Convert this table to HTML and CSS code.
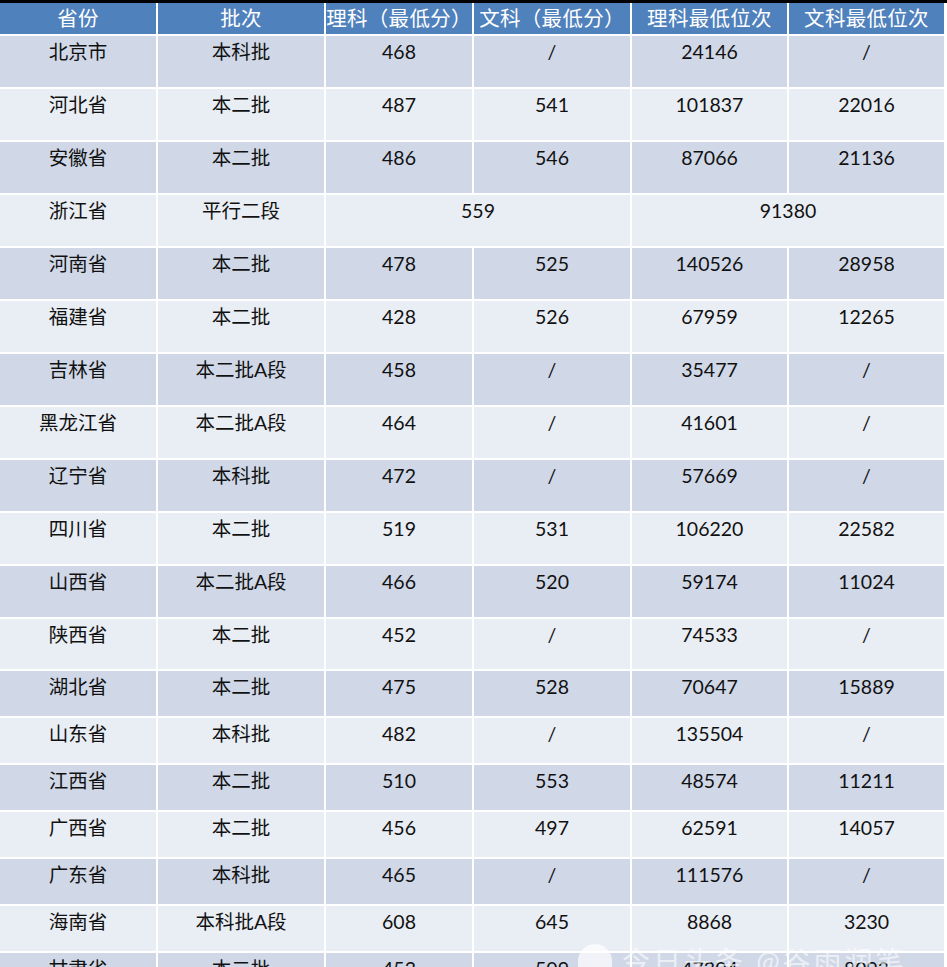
FILE: index.html
```html
<!DOCTYPE html>
<html lang="zh">
<head>
<meta charset="utf-8">
<title>各省录取最低分</title>
<link rel="stylesheet" href="styles.css">
</head>
<body>
<div class="page">
  <div class="topbar"></div>
  <table class="scores">
    <colgroup>
      <col class="c1"><col class="c2"><col class="c3"><col class="c4"><col class="c5"><col class="c6">
    </colgroup>
    <thead>
      <tr class="head">
        <th>省份</th><th>批次</th><th>理科（最低分）</th><th>文科（最低分）</th><th>理科最低位次</th><th>文科最低位次</th>
      </tr>
    </thead>
    <tbody>
      <tr class="odd tall"><td>北京市</td><td>本科批</td><td>468</td><td>/</td><td>24146</td><td>/</td></tr>
      <tr class="even tall"><td>河北省</td><td>本二批</td><td>487</td><td>541</td><td>101837</td><td>22016</td></tr>
      <tr class="odd tall"><td>安徽省</td><td>本二批</td><td>486</td><td>546</td><td>87066</td><td>21136</td></tr>
      <tr class="even tall"><td>浙江省</td><td>平行二段</td><td colspan="2">559</td><td colspan="2">91380</td></tr>
      <tr class="odd tall"><td>河南省</td><td>本二批</td><td>478</td><td>525</td><td>140526</td><td>28958</td></tr>
      <tr class="even tall"><td>福建省</td><td>本二批</td><td>428</td><td>526</td><td>67959</td><td>12265</td></tr>
      <tr class="odd tall"><td>吉林省</td><td>本二批A段</td><td>458</td><td>/</td><td>35477</td><td>/</td></tr>
      <tr class="even tall"><td>黑龙江省</td><td>本二批A段</td><td>464</td><td>/</td><td>41601</td><td>/</td></tr>
      <tr class="odd tall"><td>辽宁省</td><td>本科批</td><td>472</td><td>/</td><td>57669</td><td>/</td></tr>
      <tr class="even tall"><td>四川省</td><td>本二批</td><td>519</td><td>531</td><td>106220</td><td>22582</td></tr>
      <tr class="odd tall"><td>山西省</td><td>本二批A段</td><td>466</td><td>520</td><td>59174</td><td>11024</td></tr>
      <tr class="even tall2"><td>陕西省</td><td>本二批</td><td>452</td><td>/</td><td>74533</td><td>/</td></tr>
      <tr class="odd short"><td>湖北省</td><td>本二批</td><td>475</td><td>528</td><td>70647</td><td>15889</td></tr>
      <tr class="even short"><td>山东省</td><td>本科批</td><td>482</td><td>/</td><td>135504</td><td>/</td></tr>
      <tr class="odd short"><td>江西省</td><td>本二批</td><td>510</td><td>553</td><td>48574</td><td>11211</td></tr>
      <tr class="even short"><td>广西省</td><td>本二批</td><td>456</td><td>497</td><td>62591</td><td>14057</td></tr>
      <tr class="odd short"><td>广东省</td><td>本科批</td><td>465</td><td>/</td><td>111576</td><td>/</td></tr>
      <tr class="even short"><td>海南省</td><td>本科批A段</td><td>608</td><td>645</td><td>8868</td><td>3230</td></tr>
      <tr class="odd short"><td>甘肃省</td><td>本二批</td><td>453</td><td>509</td><td>47304</td><td>8093</td></tr>
    </tbody>
  </table>
  <div class="watermark"><span class="wm-logo"></span>今日头条 @谷雨润笔</div>
</div>
</body>
</html>
```

FILE: styles.css
```css
html, body {
  margin: 0;
  padding: 0;
  background: #ffffff;
}
body {
  width: 947px;
  height: 967px;
  overflow: hidden;
  font-family: Lato, "Noto Sans CJK SC", sans-serif;
}
.page {
  position: relative;
  width: 947px;
  height: 967px;
  overflow: hidden;
}
.topbar {
  height: 3px;
  background: #000000;
}
.scores {
  width: 945px;
  table-layout: fixed;
  border-collapse: collapse;
}
.c1 { width: 157px; }
.c2 { width: 168px; }
.c3 { width: 148px; }
.c4 { width: 158px; }
.c5 { width: 157px; }
.c6 { width: 157px; }

.scores th,
.scores td {
  border: 2px solid #ffffff;
  padding: 0;
  text-align: center;
  vertical-align: top;
  white-space: nowrap;
  overflow: hidden;
}
.scores tr:first-child th,
.scores tr:first-child td { border-top: 0; }
.scores th:first-child,
.scores td:first-child { border-left: 0; }
.scores tbody tr:first-child td { border-top: 2px solid #e8eef6; }

.head { height: 32px; background: #4f81bd; }
.head th {
  color: #ffffff;
  font-weight: normal;
  font-size: 20.5px;
  line-height: 30px;
  padding-top: 0;
  letter-spacing: 0.3px;
}
.scores td {
  color: #111111;
  font-weight: normal;
  font-size: 19.5px;
  line-height: 24px;
  padding-top: 4px;
}
.odd { background: #d0d8e8; }
.even { background: #e9edf4; }
.tall { height: 53px; }
.tall2 { height: 52px; }
.short { height: 47px; }

.watermark {
  position: absolute;
  left: 578px;
  top: 944px;
  color: rgba(255, 255, 255, 0.6);
  font-size: 28px;
  line-height: 34px;
  letter-spacing: 3px;
  white-space: nowrap;
  display: flex;
  align-items: center;
  gap: 10px;
}
.wm-logo {
  width: 34px;
  height: 34px;
  border-radius: 50% 50% 0 0;
  background: rgba(255, 255, 255, 0.7);
}
```
